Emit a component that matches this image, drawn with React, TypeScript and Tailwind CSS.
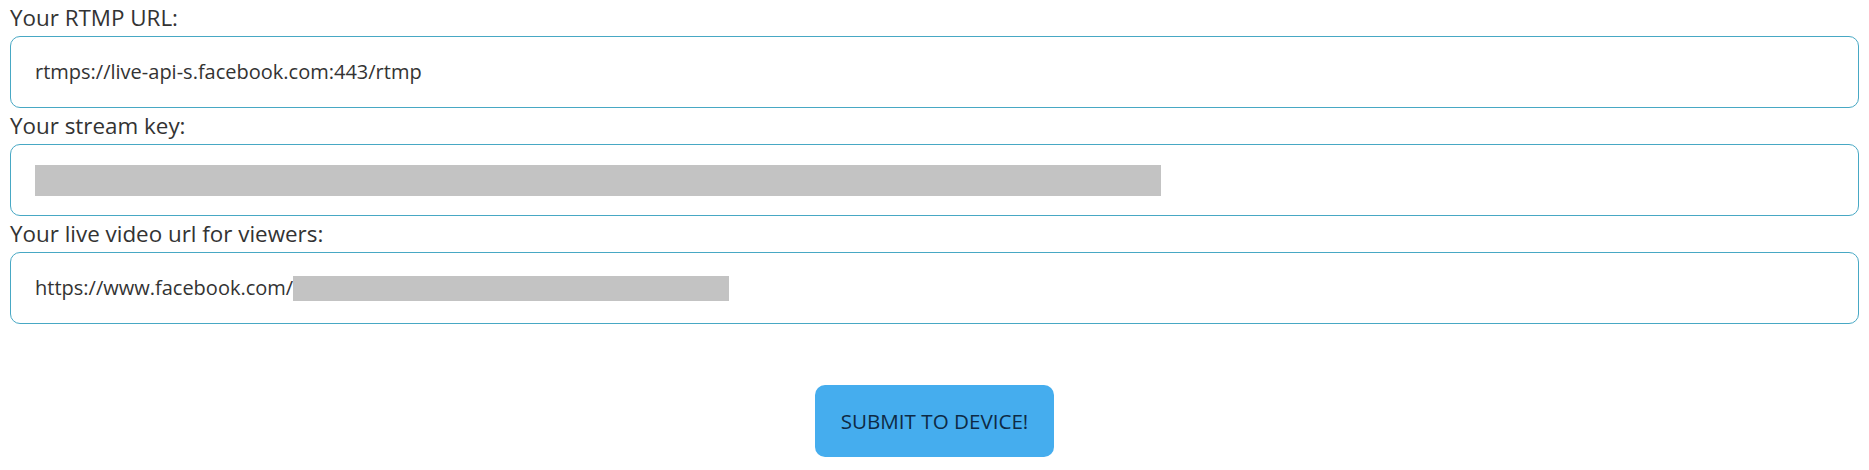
import React from "react";

const font = { fontFamily: '"Open Sans", "Noto Sans", sans-serif' };

function Field({ label, children }: { label: string; children: React.ReactNode }) {
  return (
    <div className="flex flex-col">
      <label className="text-[22.4px] leading-[36px] text-[#333333]">{label}</label>
      <div className="h-[72px] flex items-center rounded-[10px] border border-[#48a8c4] pl-[24px] text-[20px] text-[#333333]">
        {children}
      </div>
    </div>
  );
}

export default function App() {
  return (
    <div className="w-full bg-white px-[10px] h-[470px]" style={font}>
      <Field label="Your RTMP URL:">
        <span>rtmps://live-api-s.facebook.com:443/rtmp</span>
      </Field>
      <Field label="Your stream key:">
        <div className="h-[31px] w-[1126px] bg-[#c3c3c3]" />
      </Field>
      <Field label="Your live video url for viewers:">
        <span>https://www.facebook.com/</span>
        <div className="h-[25px] w-[436px] bg-[#c3c3c3]" />
      </Field>
      <div className="flex justify-center pt-[61px]">
        <button className="h-[72px] w-[239px] rounded-[10px] bg-[#45adee] text-[20.6px] text-[#0e2a44]">
          SUBMIT TO DEVICE!
        </button>
      </div>
    </div>
  );
}
